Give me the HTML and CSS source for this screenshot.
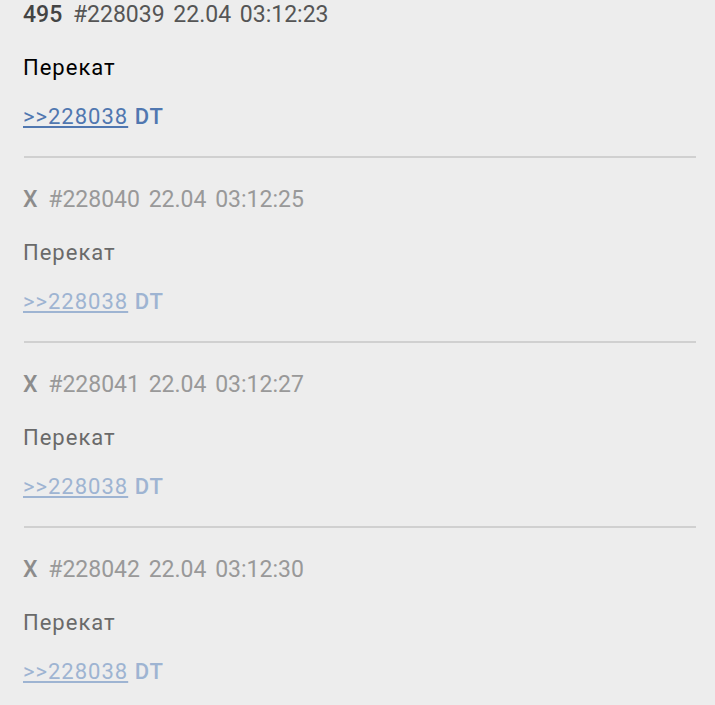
FILE: index.html
```html
<!DOCTYPE html>
<html lang="ru">
<head>
    <meta charset="UTF-8">
    <title>Тред</title>
    <link rel="stylesheet" href="styles.css">
</head>
<body>
<div class="thread">
    <div class="post">
        <div class="post-header"><b class="num">495</b> #228039 22.04 03:12:23</div>
        <p class="post-title">Перекат</p>
        <p class="post-reply"><a class="reply-link" href="#">&gt;&gt;228038</a> <b>DT</b></p>
    </div>
    <hr class="divider"/>
    <div class="post faded">
        <div class="post-header"><b class="num">X</b> #228040 22.04 03:12:25</div>
        <p class="post-title">Перекат</p>
        <p class="post-reply"><a class="reply-link" href="#">&gt;&gt;228038</a> <b>DT</b></p>
    </div>
    <hr class="divider"/>
    <div class="post faded">
        <div class="post-header"><b class="num">X</b> #228041 22.04 03:12:27</div>
        <p class="post-title">Перекат</p>
        <p class="post-reply"><a class="reply-link" href="#">&gt;&gt;228038</a> <b>DT</b></p>
    </div>
    <hr class="divider"/>
    <div class="post faded">
        <div class="post-header"><b class="num">X</b> #228042 22.04 03:12:30</div>
        <p class="post-title">Перекат</p>
        <p class="post-reply"><a class="reply-link" href="#">&gt;&gt;228038</a> <b>DT</b></p>
    </div>
</div>
</body>
</html>
```

FILE: styles.css
```css
body {
    margin: 0;
    background-color: #ededed;
    font-family: Roboto, "Noto Sans", sans-serif;
    font-size: 22px;
    letter-spacing: 1px;
}

.thread {
    padding: 0 19px 0 23px;
}

.post {
    line-height: 30px;
}
.post .post-header {
    color: #555555;
    font-size: 23px;
    letter-spacing: 0;
    word-spacing: 3px;
}
.post .post-header .num {
    color: #444444;
    font-weight: 500;
    margin-right: 2px;
}
.post .post-title {
    margin: 23px 0 0;
    color: #000000;
}
.post .post-reply {
    margin: 19px 0 0;
    color: #5077b0;
}
.post .post-reply .reply-link {
    color: #5077b0;
}
.post .post-reply b {
    font-weight: 500;
}

.post.faded .post-header {
    color: #999999;
}
.post.faded .post-header .num {
    color: #8c8c8c;
}
.post.faded .post-title {
    color: #6a6a6a;
}
.post.faded .post-reply,
.post.faded .post-reply .reply-link {
    color: #9eb4d2;
}

.divider {
    border: none;
    border-top: 2px solid #d0d0d0;
    margin: 24px 0 27px 1px;
}
```
